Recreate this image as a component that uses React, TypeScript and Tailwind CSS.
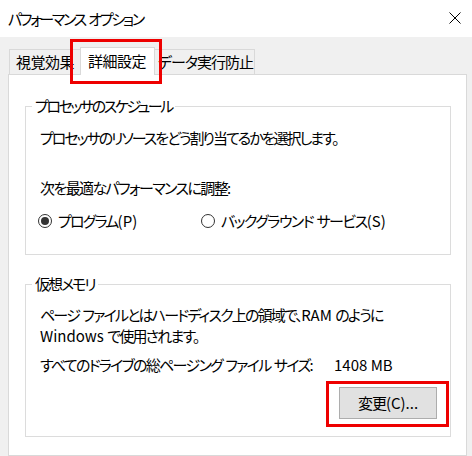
import React from "react";

function Radio({ checked }: { checked?: boolean }) {
  return (
    <span className="w-[14px] h-[14px] rounded-full border border-[#333333] bg-white flex items-center justify-center shrink-0">
      {checked && <span className="w-[8px] h-[8px] rounded-full bg-[#333333]" />}
    </span>
  );
}

function L({ children }: { children: React.ReactNode }) {
  return <span className="tracking-normal">{children}</span>;
}

const S = () => <span className="tracking-normal"> </span>;

export default function App() {
  return (
    <div className="w-[472px] h-[456px] bg-[#f0f0f0] overflow-hidden flex flex-col text-[15px] text-black tracking-[-1.8px] [font-feature-settings:'palt'] font-['Noto_Sans_CJK_JP','Noto_Sans',sans-serif]">
      {/* Title bar */}
      <div className="h-[37px] bg-white flex items-center justify-between pl-[8px] pr-[11px] shrink-0">
        <span className="leading-[20px] tracking-[-2.3px] whitespace-nowrap">
          パフォーマンス<S />オプション
        </span>
        <svg width="12" height="12" viewBox="0 0 12 12" className="mb-[2px]">
          <path d="M0.5 0.5 L11.5 11.5 M11.5 0.5 L0.5 11.5" stroke="#000" strokeWidth="1" fill="none" />
        </svg>
      </div>

      {/* Tabs */}
      <div className="flex items-end pl-[9px] pt-[10px] shrink-0">
        <div className="h-[25px] w-[73px] border border-b-0 border-[#d9d9d9] bg-[#f0f0f0] pl-[6px] leading-[24px] overflow-hidden whitespace-nowrap tracking-[-0.5px]">
          視覚効果
        </div>
        <div className="relative z-10 h-[28px] w-[75px] -mx-[2px] mb-[-1px] border border-b-0 border-[#d9d9d9] bg-white pl-[7px] leading-[26px] whitespace-nowrap tracking-[-0.5px]">
          詳細設定
          <div className="absolute -left-[11px] -right-[8px] -top-[9px] -bottom-[9px] border-[3px] border-[#ee0000]" />
        </div>
        <div className="h-[25px] w-[102px] border border-b-0 border-l-0 border-[#d9d9d9] bg-[#f0f0f0] pl-[5px] leading-[24px] overflow-hidden whitespace-nowrap tracking-[-1px]">
          データ実行防止
        </div>
      </div>

      {/* Panel */}
      <div className="ml-[8px] w-[459px] flex-1 bg-white border border-[#d9d9d9] px-[16px] pt-[21px]">
        <fieldset className="border border-[#dcdcdc] pl-[14px] pb-[23px] w-[426px]">
          <legend className="-ml-[8px] px-[3px] leading-[20px] tracking-[-2.4px]">プロセッサのスケジュール</legend>
          <div className="mt-[12px] leading-[20px] tracking-[-2px]">プロセッサのリソースをどう割り当てるかを選択します。</div>
          <div className="mt-[30px] leading-[20px] tracking-[-1.6px]">次を最適なパフォーマンスに調整:</div>
          <div className="mt-[13px] flex items-center leading-[20px]">
            <div className="flex items-center gap-[6px] w-[163px] -ml-[2px]">
              <Radio checked />
              <span>
                プログラム<L>(P)</L>
              </span>
            </div>
            <div className="flex items-center gap-[6px]">
              <Radio />
              <span className="tracking-[-1.5px] whitespace-nowrap">
                バックグラウンド<S />サービス<L>(S)</L>
              </span>
            </div>
          </div>
        </fieldset>

        <fieldset className="mt-[19px] border border-[#dcdcdc] pl-[14px] pr-[13px] pb-[17px] w-[426px]">
          <legend className="-ml-[8px] px-[3px] leading-[20px] tracking-[-2px]">仮想メモリ</legend>
          <div className="mt-[10px] leading-[21px] whitespace-nowrap">
            ページ<S />ファイルとはハードディスク上の領域で、<L>RAM </L>のように
            <br />
            <L>Windows </L>で使用されます。
          </div>
          <div className="mt-[9px] flex leading-[20px]">
            <span className="w-[294px] whitespace-nowrap tracking-[-1.7px]">
              すべてのドライブの総ページング<S />ファイル<S />サイズ:
            </span>
            <L>1408 MB</L>
          </div>
          <div className="mt-[12px] flex justify-end">
            <div className="relative">
              <button className="w-[98px] h-[32px] bg-[#e1e1e1] border border-[#adadad] leading-[20px] tracking-[-1px]">
                変更<L>(C)...</L>
              </button>
              <div className="absolute -left-[13px] -right-[12px] -top-[6px] -bottom-[8px] border-[3px] border-[#ee0000]" />
            </div>
          </div>
        </fieldset>
      </div>
    </div>
  );
}
